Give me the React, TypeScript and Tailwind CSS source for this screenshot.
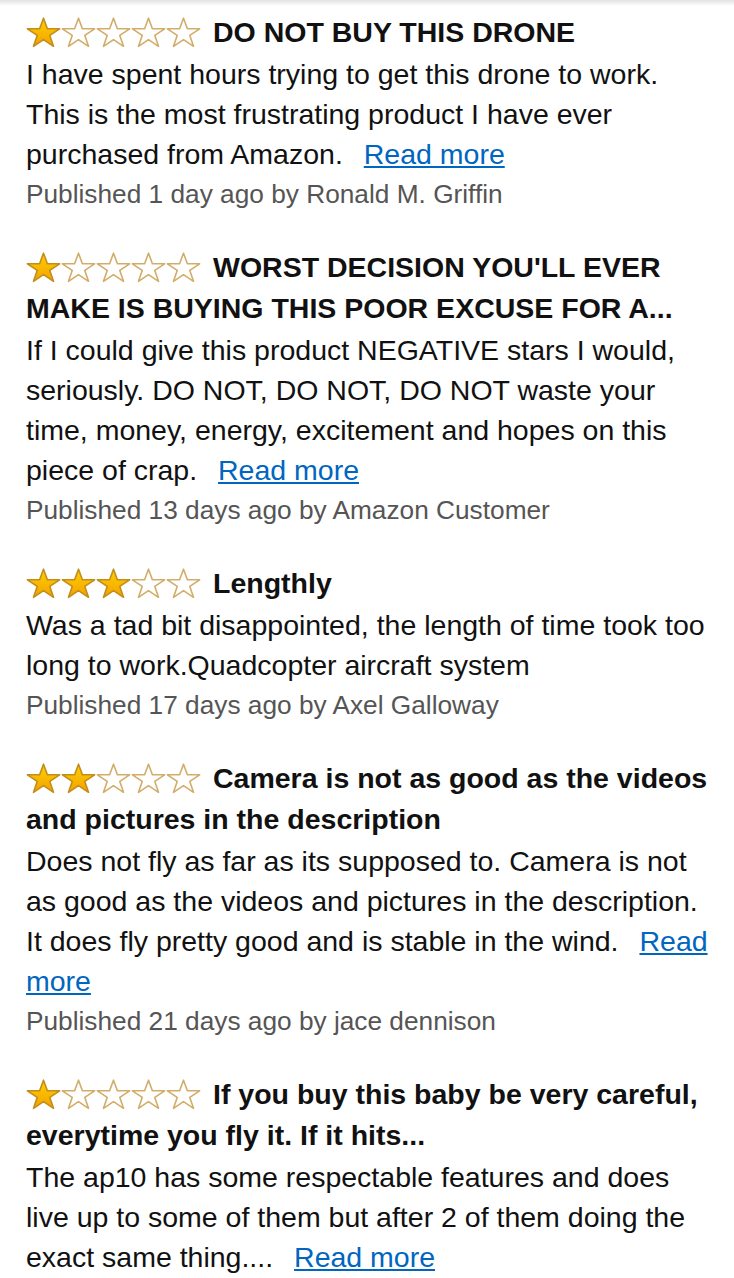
import React from "react";

type Review = {
  stars: number;
  title: string;
  body: string;
  readMore?: boolean;
  meta?: string;
};

const reviews: Review[] = [
  {
    stars: 1,
    title: "DO NOT BUY THIS DRONE",
    body: "I have spent hours trying to get this drone to work. This is the most frustrating product I have ever purchased from Amazon.",
    readMore: true,
    meta: "Published 1 day ago by Ronald M. Griffin",
  },
  {
    stars: 1,
    title: "WORST DECISION YOU'LL EVER MAKE IS BUYING THIS POOR EXCUSE FOR A...",
    body: "If I could give this product NEGATIVE stars I would, seriously. DO NOT, DO NOT, DO NOT waste your time, money, energy, excitement and hopes on this piece of crap.",
    readMore: true,
    meta: "Published 13 days ago by Amazon Customer",
  },
  {
    stars: 3,
    title: "Lengthly",
    body: "Was a tad bit disappointed, the length of time took too long to work.Quadcopter aircraft system",
    meta: "Published 17 days ago by Axel Galloway",
  },
  {
    stars: 2,
    title: "Camera is not as good as the videos and pictures in the description",
    body: "Does not fly as far as its supposed to. Camera is not as good as the videos and pictures in the description. It does fly pretty good and is stable in the wind.",
    readMore: true,
    meta: "Published 21 days ago by jace dennison",
  },
  {
    stars: 1,
    title: "If you buy this baby be very careful, everytime you fly it. If it hits...",
    body: "The ap10 has some respectable features and does live up to some of them but after 2 of them doing the exact same thing....",
    readMore: true,
  },
];

function Star({ filled, id }: { filled: boolean; id: string }) {
  return (
    <svg width="35" height="31" viewBox="0 0 35 31" className="block">
      <defs>
        <linearGradient id={id} x1="0" y1="0" x2="0" y2="1">
          <stop offset="0%" stopColor="#ffd000" />
          <stop offset="100%" stopColor="#f2a200" />
        </linearGradient>
      </defs>
      <polygon
        points="17.5,1.2 21.4,11.8 33.6,11.8 23.8,18.4 27.5,29.3 17.5,22.6 7.5,29.3 11.2,18.4 1.4,11.8 13.6,11.8"
        fill={filled ? `url(#${id})` : "#ffffff"}
        stroke={filled ? "#c38d1a" : "#d2ad6a"}
        strokeWidth="1.6"
        strokeLinejoin="round"
      />
    </svg>
  );
}

function Stars({ count, idx }: { count: number; idx: number }) {
  return (
    <span className="inline-flex align-top mt-[5px] mr-3">
      {[0, 1, 2, 3, 4].map((i) => (
        <Star key={i} filled={i < count} id={`g-${idx}-${i}`} />
      ))}
    </span>
  );
}

export default function App() {
  return (
    <div
      className="w-[734px] min-h-[1278px] bg-white text-[#111]"
      style={{ fontFamily: '"Liberation Sans", Arial, sans-serif' }}
    >
      <div className="h-[6px] bg-gradient-to-b from-[#e2e2e2] to-white" />
      <div className="pl-[26px] pr-[22px] pt-[6px] flex flex-col gap-[33px]">
        {reviews.map((r, idx) => (
          <div key={idx}>
            <div className="text-[28.5px] leading-[41px] font-bold">
              <Stars count={r.stars} idx={idx} />
              {r.title}
            </div>
            <div className="text-[28.5px] leading-[40px] mt-[1px]">
              {r.body}
              {r.readMore && (
                <>
                  {" "}
                  <a href="#" className="ml-[13px] text-[#0066c0] underline">
                    Read more
                  </a>
                </>
              )}
            </div>
            {r.meta && (
              <div className="text-[26.25px] leading-[40px] text-[#555]">
                {r.meta}
              </div>
            )}
          </div>
        ))}
      </div>
    </div>
  );
}
